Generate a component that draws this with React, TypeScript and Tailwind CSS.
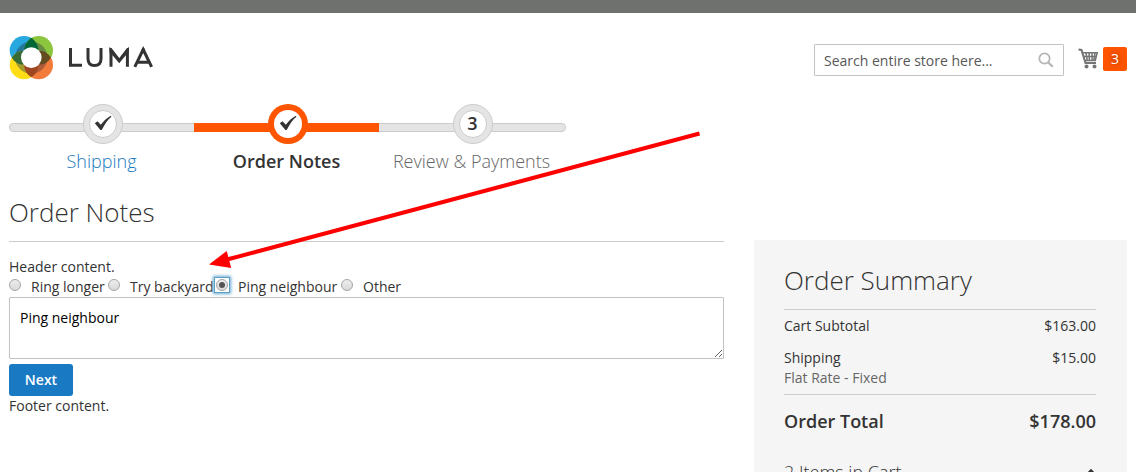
import React from "react";

function Logo() {
  return (
    <svg width="144" height="44" viewBox="0 0 144 44" role="img" aria-label="LUMA">
      <defs>
        <clipPath id="c-blue"><circle cx="15" cy="14.3" r="14.3" /></clipPath>
        <clipPath id="c-orange"><circle cx="29.7" cy="29" r="14.3" /></clipPath>
        <clipPath id="c-ring"><circle cx="22.3" cy="21.6" r="16.2" /></clipPath>
      </defs>
      <circle cx="15" cy="14.3" r="14.3" fill="#27a8e0" />
      <circle cx="29.7" cy="14.3" r="14.3" fill="#8cc63f" />
      <circle cx="15" cy="29" r="14.3" fill="#ffde17" />
      <circle cx="29.7" cy="29" r="14.3" fill="#f37b3b" />
      <g clipPath="url(#c-ring)">
        <circle cx="15" cy="14.3" r="14.3" fill="#25789a" />
        <circle cx="29.7" cy="14.3" r="14.3" fill="#648c45" />
        <circle cx="15" cy="29" r="14.3" fill="#a59a2c" />
        <circle cx="29.7" cy="29" r="14.3" fill="#b15c39" />
      </g>
      <g clipPath="url(#c-blue)">
        <circle cx="29.7" cy="14.3" r="14.3" fill="#006838" />
        <circle cx="15" cy="29" r="14.3" fill="#386b35" />
      </g>
      <g clipPath="url(#c-orange)">
        <circle cx="29.7" cy="14.3" r="14.3" fill="#634b20" />
        <circle cx="15" cy="29" r="14.3" fill="#9d461f" />
      </g>
      <circle cx="22.3" cy="21.6" r="10.3" fill="#fff" />
      <g fill="none" stroke="#333" strokeWidth="3">
        <path d="M61.500 12v17.300H73" />
        <path d="M79 12v10.500c0 4.500 2.500 7 6.500 7s6.500-2.500 6.500-7V12" />
        <path d="M102 30.800V15l8.200 9.800L118.400 15v15.800" />
        <path d="M125.800 30.800 134.200 13.500 142.600 30.800M129 26.300h10.500" />
      </g>
      <path d="M100.500 12h2l7.800 10.200L118 12h1.900v5h-3l-6.600 8-6.800-8h-3ZM133.200 12h2l1 3h-4Z" fill="#333" />
    </svg>
  );
}

function Check() {
  return (
    <svg className="-mt-[3px]" width="18" height="16" viewBox="0 0 18 16">
      <path d="M.8 8.200 3.500 6.200 6.800 9.800C9.500 6.200 12.500 3.200 16.800.8L17.400 1.700C13.500 5 10.800 9 8 14.500 7.500 15.200 6.500 15.200 6 14.500Z" fill="#333" />
    </svg>
  );
}

interface StepProps {
  label: string;
  className: string;
  labelClass: string;
  barClass: string;
  active?: boolean;
  done?: boolean;
}

function Step({ label, className, labelClass, barClass, active, done }: StepProps) {
  return (
    <li className={className}>
      <div className="relative flex h-10 items-center">
        <div className={`absolute top-[19px] h-[9px] w-full ${barClass}`} />
        <div className={`relative ml-[74px] flex size-10 items-center justify-center rounded-full ${active ? "bg-[#ff5501]" : "border border-[#ccc] bg-[#e4e4e4]"}`}>
          <div className={`flex size-7 items-center justify-center rounded-full bg-white text-[18px] font-semibold leading-none ${active ? "" : "border border-[#ccc]"}`}>
            {done ? <Check /> : <span className="-mt-[2px] -ml-[1px]">3</span>}
          </div>
        </div>
      </div>
      <div className={`mt-[5px] text-center text-[18px] leading-[25px] ${labelClass}`}>{label}</div>
    </li>
  );
}

function Radio({ label, checked, className }: { label: string; checked?: boolean; className: string }) {
  return (
    <label className={`flex h-5 shrink-0 whitespace-nowrap ${className}`}>
      <span className={`flex h-[16px] w-[16px] items-center justify-center ${checked ? "bg-white shadow-[0_0_3px_1px_#68a8d0] outline outline-1 -outline-offset-1 outline-[#5f9fc5]" : ""}`}>
        <span className="flex size-3 items-center justify-center rounded-full border border-[#a5a5a5] bg-linear-to-b from-[#ededed] to-[#d9d9d9]">
          {checked && <span className="size-[6px] rounded-full bg-[#555]" />}
        </span>
      </span>
      <span className="ml-[8px]">{label}</span>
    </label>
  );
}

export default function App() {
  return (
    <div className="relative h-[472px] w-[1136px] overflow-hidden bg-white font-['Open_Sans','Noto_Sans',sans-serif] text-[14px] leading-5 text-[#333]">
      <div className="h-[13px] bg-[#6e716e]" />
      <header className="flex h-[91px] items-start justify-between pl-[9px] pr-[9px]">
        <div className="mt-[23px]"><Logo /></div>
        <div className="mt-[31px] flex">
          <div className="flex h-8 w-[250px] items-center justify-between rounded-[1px] border border-[#c2c2c2] pl-[9px] pr-[9px] text-[#575757]">
            <span className="pt-[2px]">Search entire store here...</span>
            <svg width="16" height="16" viewBox="0 0 16 16" fill="none" stroke="#b5b5b5">
              <circle cx="6.500" cy="6.500" r="5.200" strokeWidth="1.700" />
              <path d="m10 10.300 4.800 4.500" strokeWidth="2.200" />
            </svg>
          </div>
          <svg className="ml-[14px] mt-[4px]" width="21" height="21" viewBox="0 0 21 21" fill="none" stroke="#757575">
            <path d="M.5 1.500 3.500 2 7.500 15H18" strokeWidth="2" />
            <path d="M4.500 4.800H19.200L17.300 12.500H7M5 8.500H18.500M8 5l1.200 7M11 5l.4 7M14 5v7M17 5l-1.200 7" strokeWidth="1.500" />
            <circle cx="8.500" cy="18.500" r="2" fill="#757575" stroke="none" />
            <circle cx="16.500" cy="18.500" r="2" fill="#757575" stroke="none" />
          </svg>
          <span className="ml-[4px] mt-[3px] flex h-6 w-6 items-center justify-center rounded-[2px] bg-[#ff5501] text-white [text-shadow:0_0_6px_rgba(0,0,0,0.6)]">3</span>
        </div>
      </header>

      <ul className="flex pl-[9px]">
        <Step label="Shipping" className="w-[185px]" done labelClass="font-light text-[#1979c3]" barClass="rounded-l-[6px] border-y border-l border-[#ccc] bg-[#e4e4e4]" />
        <Step label="Order Notes" className="w-[185px]" active done labelClass="font-semibold" barClass="bg-[#ff5501]" />
        <Step label="Review & Payments" className="w-[187px]" labelClass="-ml-[2px] font-light text-[#666]" barClass="rounded-r-[6px] border-y border-r border-[#ccc] bg-[#e4e4e4]" />
      </ul>

      <div className="flex pl-[9px] pr-[9px]">
        <main className="w-[715px] pt-[21px]">
          <h1 className="h-[47px] border-b border-[#ccc] text-[26px] font-light leading-[34px]">Order Notes</h1>
          <p className="mt-[15px]">Header content.</p>
          <div className="flex">
            <Radio label="Ring longer" className="-ml-[2px] w-[99px]" />
            <Radio label="Try backyard" className="w-[108px]" />
            <Radio label="Ping neighbour" className="w-[125px]" checked />
            <Radio label="Other" className="" />
          </div>
          <textarea
            className="block h-[62px] w-full resize rounded-[1px] border border-[#c2c2c2] px-[10px] py-[10px] leading-5 text-black outline-none"
            defaultValue="Ping neighbour"
          />
          <button className="mt-[5px] block h-8 w-16 rounded-[3px] bg-[#1979c3] font-semibold text-white">Next</button>
          <p>Footer content.</p>
        </main>

        <aside className="ml-[30px] mt-[66px] h-[300px] w-[373px] bg-[#f5f5f5] pl-[30px] pr-[31px] pt-[22px]">
          <h2 className="h-[48px] border-b border-[#ccc] text-[26px] font-light leading-[36px]">Order Summary</h2>
          <div className="mt-[6px] flex justify-between"><span>Cart Subtotal</span><span>$163.00</span></div>
          <div className="mt-[12px] flex justify-between"><span>Shipping</span><span>$15.00</span></div>
          <div className="text-[#666]">Flat Rate - Fixed</div>
          <div className="mt-[6px] flex justify-between border-t border-[#ccc] pt-[13px] text-[18px] font-semibold leading-[26px]">
            <span>Order Total</span><span>$178.00</span>
          </div>
          <div className="mt-[25px] flex justify-between text-[18px] font-light leading-[26px]">
            <span>2 Items in Cart</span>
            <svg className="mt-[9px]" width="10" height="7" viewBox="0 0 10 7" fill="none" stroke="#333" strokeWidth="1.600"><path d="m1 6 4-4 4 4" /></svg>
          </div>
        </aside>
      </div>

      <svg className="pointer-events-none absolute left-0 top-0" width="1136" height="472" viewBox="0 0 1136 472">
        <path d="M699.500 133.500 228 259.300" stroke="#f00" strokeWidth="4" />
        <path d="M209 264.500 226.700 251 231.200 268Z" fill="#f00" />
      </svg>
    </div>
  );
}
